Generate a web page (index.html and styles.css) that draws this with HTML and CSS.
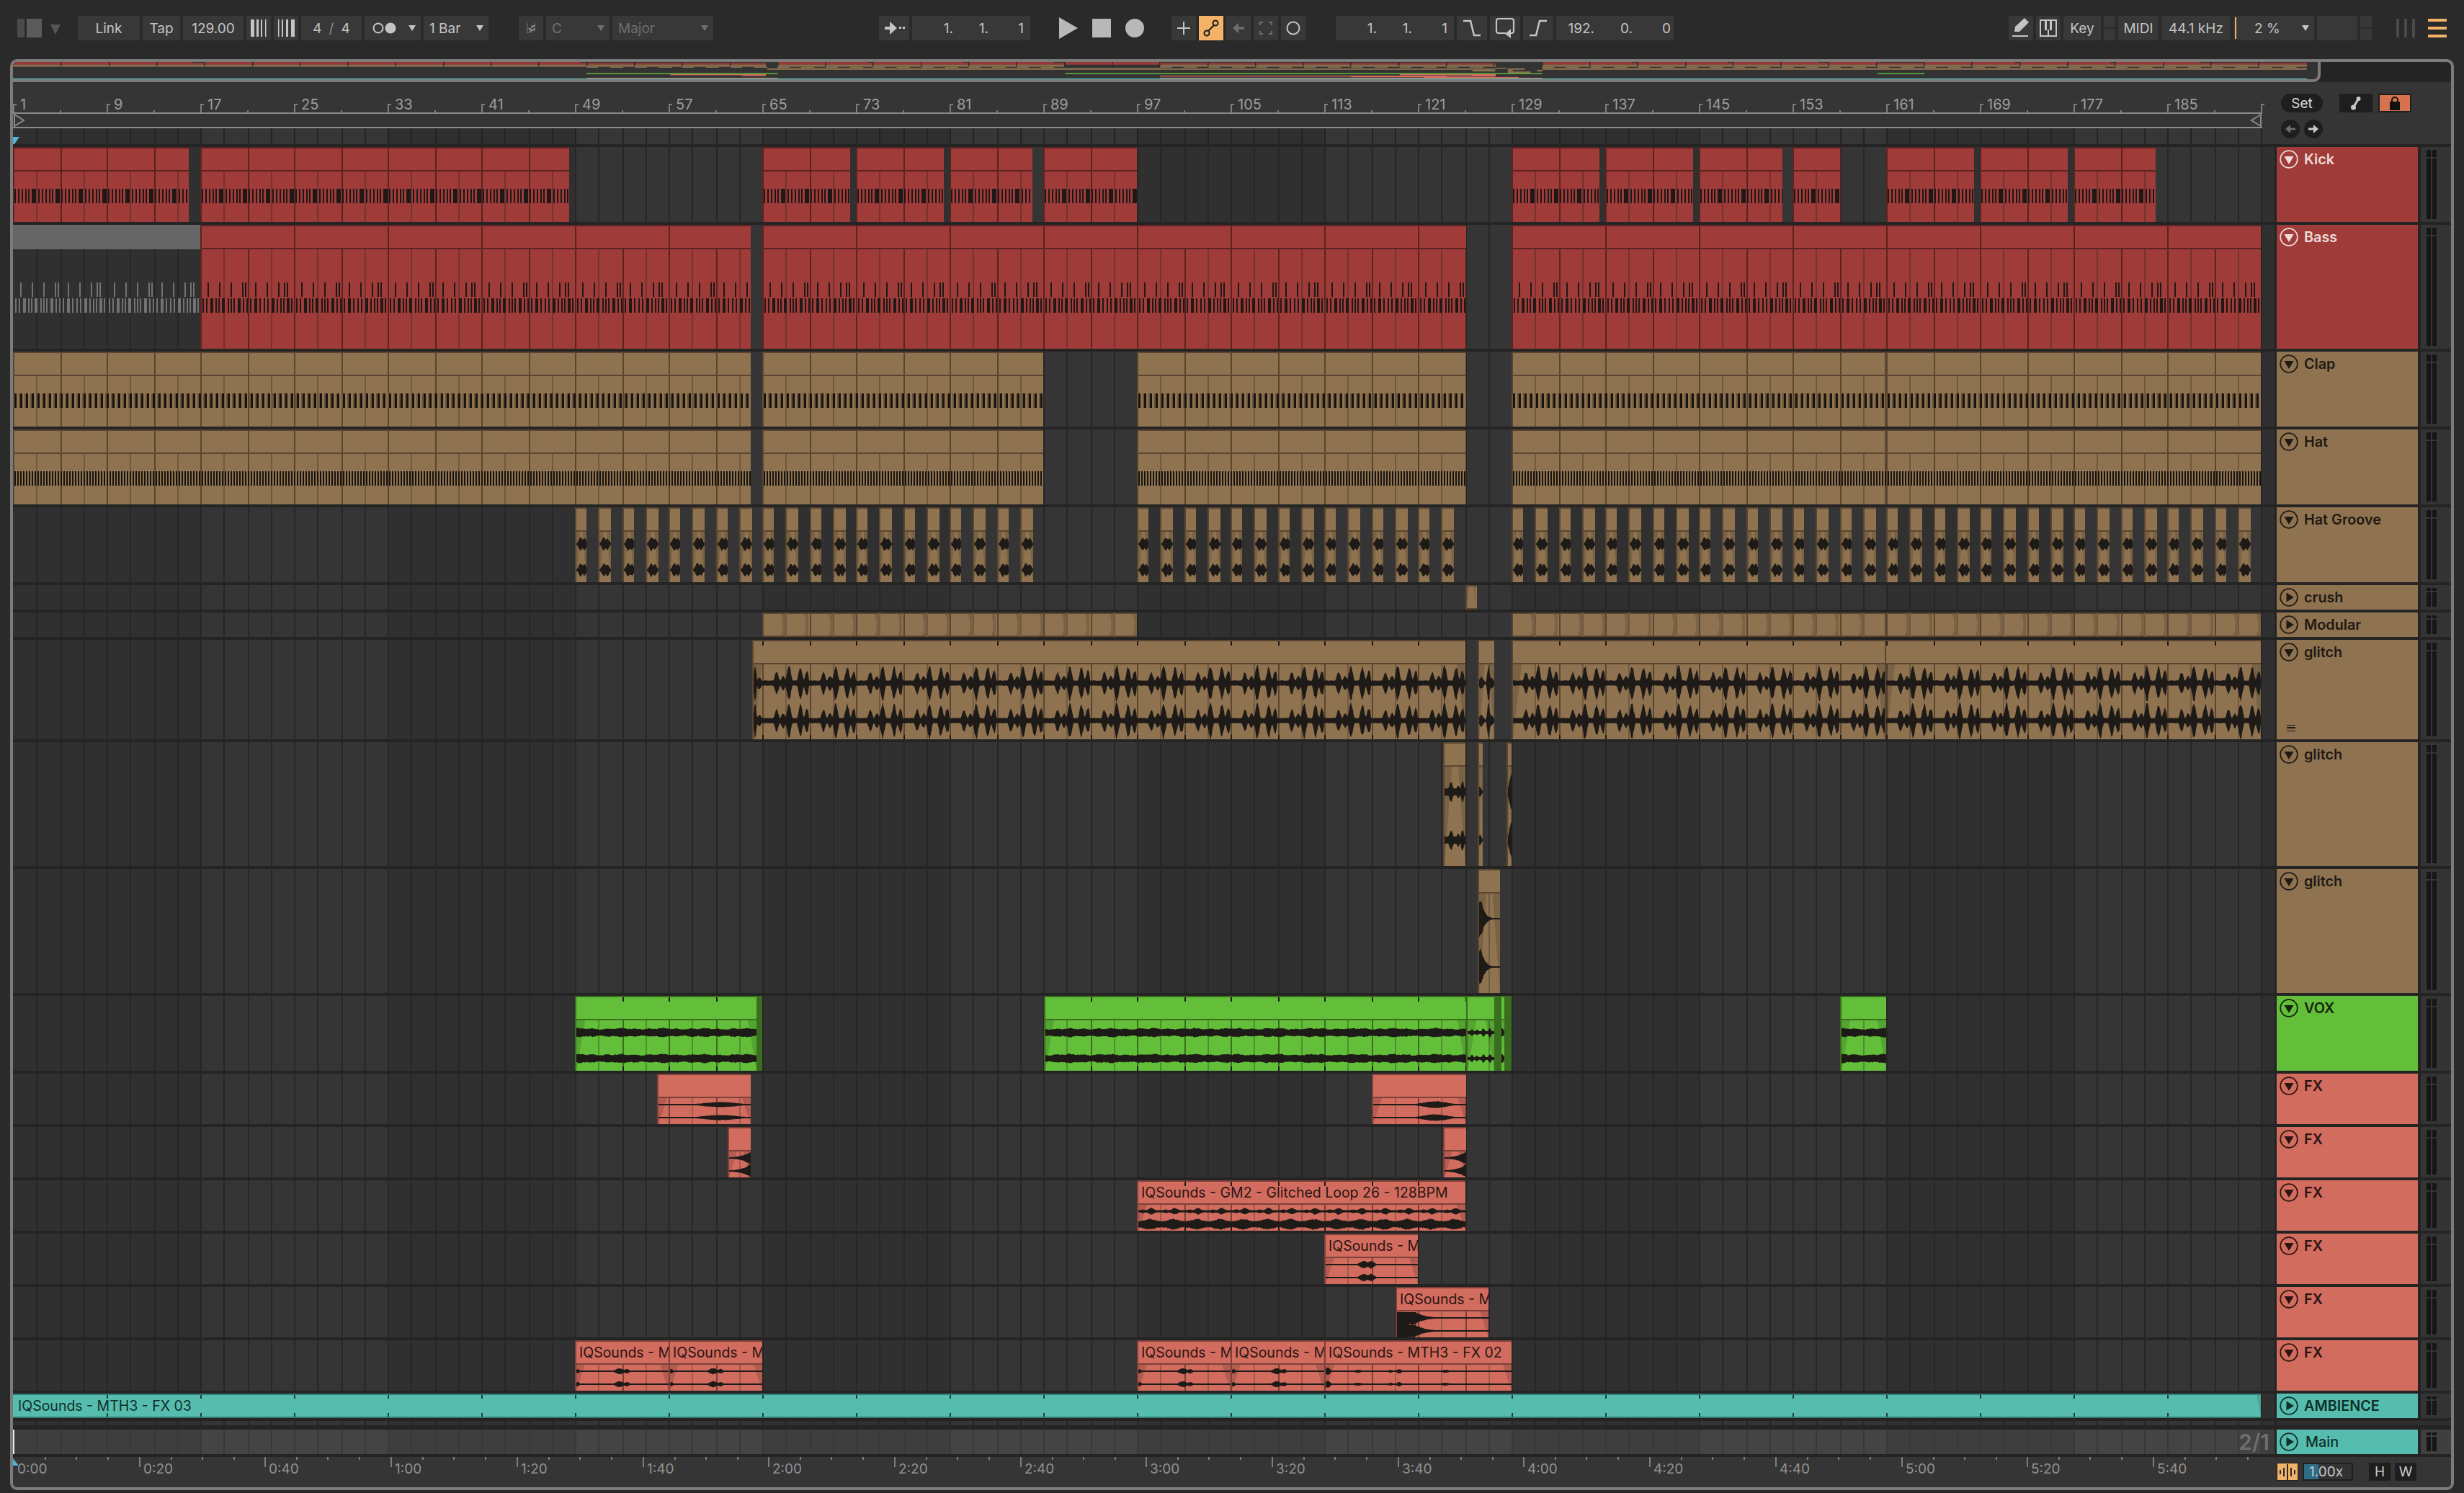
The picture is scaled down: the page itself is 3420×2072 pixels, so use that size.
FILE: index.html
```html
<!DOCTYPE html>
<html lang="en">
<head>
<meta charset="utf-8">
<title>Arrangement</title>
<link rel="stylesheet" href="styles.css">
</head>
<body>
<svg class="defs" width="0" height="0" aria-hidden="true">
  <symbol id="fold-open" viewBox="0 0 26 26"><circle cx="13" cy="13" r="11.8" fill="none" stroke="currentColor" stroke-width="1.8"/><path d="M6.5 9h13L13 20z" fill="currentColor"/></symbol>
  <symbol id="fold-closed" viewBox="0 0 26 26"><circle cx="13" cy="13" r="11.8" fill="none" stroke="currentColor" stroke-width="1.8"/><path d="M9.500 6.500v13L20 13z" fill="currentColor"/></symbol>
</svg>

<header class="toolbar">
  <div class="tb-group g-app">
    <svg class="ico" width="60" height="34" viewBox="0 0 60 34"><rect x="0" y="4" width="10" height="26" fill="#4b4b4b"/><rect x="13" y="4" width="21" height="26" fill="#5b5b5b"/><path d="M46 12h14l-7 14z" fill="#555"/></svg>
  </div>
  <div class="tb-group g-link">
    <div class="btn w-link">Link</div>
    <div class="btn w-tap">Tap</div>
    <div class="btn w-tempo">129.00</div>
    <div class="btn w-nudge"><svg width="26" height="26" viewBox="0 0 26 26"><g fill="#c4c4c4"><rect x="2" y="1" width="5" height="24"/><rect x="10" y="1" width="3" height="24"/><rect x="16" y="1" width="2" height="24"/><rect x="22" y="1" width="1.500" height="24"/></g></svg></div>
    <div class="btn w-nudge"><svg width="26" height="26" viewBox="0 0 26 26"><g fill="#c4c4c4"><rect x="2" y="1" width="1.500" height="24"/><rect x="7" y="1" width="2" height="24"/><rect x="13" y="1" width="3" height="24"/><rect x="20" y="1" width="5" height="24"/></g></svg></div>
    <div class="btn w-sig">4 <span class="slash">/</span> 4</div>
    <div class="btn w-metro"><svg width="34" height="18" viewBox="0 0 34 18"><circle cx="8" cy="9" r="6.500" fill="none" stroke="#c4c4c4" stroke-width="2"/><circle cx="25" cy="9" r="7.500" fill="#c4c4c4"/></svg><i class="caret"></i></div>
    <div class="btn w-bar">1 Bar<i class="caret"></i></div>
  </div>
  <div class="tb-group g-scale dim">
    <div class="btn w-acc"><span class="accid">♭♯</span></div>
    <div class="btn w-key">C<i class="caret"></i></div>
    <div class="btn w-mode">Major<i class="caret"></i></div>
  </div>
  <div class="tb-group g-arr">
    <div class="btn w-follow"><svg width="34" height="24" viewBox="0 0 34 24"><path d="M4 10h7V3l10 9-10 9v-7H4z" fill="#c4c4c4"/><rect x="24" y="10" width="3" height="3" fill="#c4c4c4"/><rect x="29" y="10" width="3" height="3" fill="#c4c4c4"/></svg></div>
    <div class="btn pos w-pos"><span>1.</span><span>1.</span><span>1</span></div>
  </div>
  <div class="tb-group g-transport">
    <svg width="26" height="30" viewBox="0 0 26 30"><path d="M0 0l26 15L0 30z" fill="#b8b8b8"/></svg>
    <svg width="26" height="26" viewBox="0 0 26 26"><rect width="26" height="26" fill="#b8b8b8"/></svg>
    <svg width="26" height="26" viewBox="0 0 26 26"><circle cx="13" cy="13" r="13" fill="#b8b8b8"/></svg>
  </div>
  <div class="tb-group g-auto">
    <div class="btn w-sq"><svg width="18" height="18" viewBox="0 0 18 18"><path d="M8 0h2v8h8v2h-8v8H8v-8H0V8h8z" fill="#c4c4c4"/></svg></div>
    <div class="btn w-sq on"><svg width="24" height="24" viewBox="0 0 24 24" fill="none" stroke="#1a1a1a" stroke-width="2"><circle cx="6" cy="19" r="3.500"/><circle cx="18" cy="5" r="3.500"/><path d="M8 16l8-8"/></svg></div>
    <div class="btn w-sq"><svg width="20" height="20" viewBox="0 0 22 22"><path d="M20 9h-9V3L2 11l9 8v-6h9z" fill="#6e6e6e"/></svg></div>
    <div class="btn w-sq"><svg width="18" height="18" viewBox="0 0 18 18" fill="none" stroke="#6e6e6e" stroke-width="2"><path d="M1 5V1h4M13 1h4v4M17 13v4h-4M5 17H1v-4"/></svg></div>
    <div class="btn w-sq"><svg width="20" height="20" viewBox="0 0 20 20"><circle cx="10" cy="10" r="8.500" fill="none" stroke="#c4c4c4" stroke-width="2"/></svg></div>
  </div>
  <div class="tb-group g-loop">
    <div class="btn pos w-lstart"><span>1.</span><span>1.</span><span>1</span></div>
    <div class="btn w-punch"><svg width="26" height="26" viewBox="0 0 26 26"><path d="M1 3h10l5 20h9" fill="none" stroke="#c4c4c4" stroke-width="2.500"/></svg></div>
    <div class="btn w-punch"><svg width="28" height="30" viewBox="0 0 28 30"><path d="M15 22H5a3 3 0 0 1-3-3V5a3 3 0 0 1 3-3h18a3 3 0 0 1 3 3v14a3 3 0 0 1-3 3h-1" fill="none" stroke="#c4c4c4" stroke-width="2.200"/><path d="M22 16l-8 7 8 6z" fill="#c4c4c4"/></svg></div>
    <div class="btn w-punch"><svg width="26" height="26" viewBox="0 0 26 26"><path d="M1 23h9L15 3h10" fill="none" stroke="#c4c4c4" stroke-width="2.500"/></svg></div>
    <div class="btn pos w-llen"><span>192.</span><span>0.</span><span>0</span></div>
  </div>
  <div class="tb-group g-status">
    <div class="btn w-pencil"><svg width="24" height="28" viewBox="0 0 24 28"><path d="M17 0l6 6-13 13H3l1-7z" fill="#c4c4c4"/><rect x="0" y="24" width="22" height="2" fill="#c4c4c4"/></svg></div>
    <div class="btn w-pencil"><svg width="24" height="24" viewBox="0 0 24 24"><rect x="1" y="1" width="22" height="22" fill="none" stroke="#c4c4c4" stroke-width="2"/><g fill="#c4c4c4"><rect x="7" y="1" width="3" height="14"/><rect x="14" y="1" width="3" height="14"/><rect x="11" y="14" width="2" height="9"/></g></svg></div>
    <div class="btn w-keybtn">Key</div>
    <div class="stack"><i></i><i></i></div>
    <div class="btn w-midi">MIDI</div>
    <div class="btn w-rate">44.1 kHz</div>
    <div class="btn w-cpu"><b class="cpu-line"></b><span class="cpu-val">2 %</span><i class="caret"></i></div>
    <div class="btn w-blank"></div>
    <div class="stack"><i></i><i></i></div>
  </div>
  <div class="tb-group g-menu">
    <div class="bars"><i></i><i></i><i></i></div>
    <div class="burger"><i></i><i></i><i></i></div>
  </div>
</header>

<main class="frame">
  <div class="overview-row">
    <div class="overview"><svg id="overview" width="3203" height="24"></svg></div>
    <div class="overview-rest"></div>
  </div>

  <div class="ruler-row">
    <div class="ruler-col">
      <div class="beat-ruler" id="beats"></div>
      <div class="locators">
        <svg class="loc-start" width="18" height="18" viewBox="0 0 18 18"><path d="M2 1l13 8L2 17z" fill="none" stroke="#8a8a8a" stroke-width="2"/></svg>
        <svg class="loc-end" width="18" height="18" viewBox="0 0 18 18"><path d="M16 1L3 9l13 8z" fill="none" stroke="#8a8a8a" stroke-width="2"/></svg>
      </div>
      <div class="scrub" data-palette="scrub"><svg class="marker" width="10" height="10" viewBox="0 0 10 10"><path d="M0 0h9L2 10H0z" fill="#4ab7d6"/></svg></div>
    </div>
    <div class="set-panel">
      <div class="set-line">
        <div class="set-pill">Set</div>
        <div class="set-sq"><svg width="16" height="20" viewBox="0 0 16 20"><path d="M11 5L5 15" stroke="#c8c8c8" stroke-width="3"/><circle cx="11.500" cy="4" r="3" fill="#c8c8c8"/><circle cx="4.500" cy="16" r="3.500" fill="#c8c8c8"/></svg></div>
        <div class="set-sq lock"><svg width="16" height="20" viewBox="0 0 16 20"><path d="M4 9V6a4 4 0 0 1 8 0v3" fill="none" stroke="#111" stroke-width="2"/><rect x="1" y="8" width="14" height="12" fill="#111"/></svg></div>
      </div>
      <div class="set-line">
        <div class="set-round"><svg width="16" height="16" viewBox="0 0 16 16"><path d="M15 6.500H8V2L1 8l7 6V9.500h7z" fill="#6e6e6e"/></svg></div>
        <div class="set-round gap-small"><svg width="16" height="16" viewBox="0 0 16 16"><path d="M1 6.500h7V2l7 6-7 6V9.500H1z" fill="#c8c8c8"/></svg></div>
      </div>
    </div>
  </div>

  <section class="tracks">
    <div class="track h104 red" data-track="kick"><div class="lane"></div><div class="tname"><svg class="fold"><use href="#fold-open"/></svg><span>Kick</span></div><div class="meter"><i></i><i></i></div></div>
    <div class="track h172 red" data-track="bass"><div class="lane"></div><div class="tname"><svg class="fold"><use href="#fold-open"/></svg><span>Bass</span></div><div class="meter"><i></i><i></i></div></div>
    <div class="track h104 tan" data-track="clap"><div class="lane"></div><div class="tname"><svg class="fold"><use href="#fold-open"/></svg><span>Clap</span></div><div class="meter"><i></i><i></i></div></div>
    <div class="track h104 tan" data-track="hat"><div class="lane"></div><div class="tname"><svg class="fold"><use href="#fold-open"/></svg><span>Hat</span></div><div class="meter"><i></i><i></i></div></div>
    <div class="track h104 tan" data-track="groove"><div class="lane"></div><div class="tname"><svg class="fold"><use href="#fold-open"/></svg><span>Hat Groove</span></div><div class="meter"><i></i><i></i></div></div>
    <div class="track h34 tan" data-track="crush"><div class="lane"></div><div class="tname"><svg class="fold"><use href="#fold-closed"/></svg><span>crush</span></div><div class="meter thin"><i></i><i></i></div></div>
    <div class="track h34 tan" data-track="modular"><div class="lane"></div><div class="tname"><svg class="fold"><use href="#fold-closed"/></svg><span>Modular</span></div><div class="meter thin"><i></i><i></i></div></div>
    <div class="track h138 tan" data-track="glitch1"><div class="lane"></div><div class="tname"><svg class="fold"><use href="#fold-open"/></svg><span>glitch</span><b class="handle"></b></div><div class="meter"><i></i><i></i></div></div>
    <div class="track h172 tan" data-track="glitch2"><div class="lane"></div><div class="tname"><svg class="fold"><use href="#fold-open"/></svg><span>glitch</span></div><div class="meter"><i></i><i></i></div></div>
    <div class="track h172 tan" data-track="glitch3"><div class="lane"></div><div class="tname"><svg class="fold"><use href="#fold-open"/></svg><span>glitch</span></div><div class="meter"><i></i><i></i></div></div>
    <div class="track h104 green" data-track="vox"><div class="lane"></div><div class="tname"><svg class="fold"><use href="#fold-open"/></svg><span>VOX</span></div><div class="meter"><i></i><i></i></div></div>
    <div class="track h70 salmon" data-track="fx1"><div class="lane"></div><div class="tname"><svg class="fold"><use href="#fold-open"/></svg><span>FX</span></div><div class="meter"><i></i><i></i></div></div>
    <div class="track h70 salmon" data-track="fx2"><div class="lane"></div><div class="tname"><svg class="fold"><use href="#fold-open"/></svg><span>FX</span></div><div class="meter"><i></i><i></i></div></div>
    <div class="track h70 salmon" data-track="fx3"><div class="lane"></div><div class="tname"><svg class="fold"><use href="#fold-open"/></svg><span>FX</span></div><div class="meter"><i></i><i></i></div></div>
    <div class="track h70 salmon" data-track="fx4"><div class="lane"></div><div class="tname"><svg class="fold"><use href="#fold-open"/></svg><span>FX</span></div><div class="meter"><i></i><i></i></div></div>
    <div class="track h70 salmon" data-track="fx5"><div class="lane"></div><div class="tname"><svg class="fold"><use href="#fold-open"/></svg><span>FX</span></div><div class="meter"><i></i><i></i></div></div>
    <div class="track h70 salmon" data-track="fx6"><div class="lane"></div><div class="tname"><svg class="fold"><use href="#fold-open"/></svg><span>FX</span></div><div class="meter"><i></i><i></i></div></div>
    <div class="track h34 teal" data-track="amb"><div class="lane"></div><div class="tname"><svg class="fold"><use href="#fold-closed"/></svg><span>AMBIENCE</span></div><div class="meter thin"><i></i><i></i></div></div>
  </section>

  <div class="track stub"><div class="lane" data-palette="track"></div><div class="stub-fill"></div></div>

  <div class="track h34 teal main-track">
    <div class="lane" data-palette="main"><b class="playhead"></b><span class="sig-note">2/1</span></div>
    <div class="tname"><svg class="fold"><use href="#fold-closed"/></svg><span class="main-name">Main</span></div>
    <div class="meter thin light"><i></i><i></i></div>
  </div>

  <div class="time-row">
    <div class="time-ruler" id="times"><svg class="marker-time" width="10" height="10" viewBox="0 0 10 10"><path d="M0 0l8 10H0z" fill="#4ab7d6"/></svg></div>
    <div class="time-tools">
      <div class="tool-wave"><svg width="24" height="22" viewBox="0 0 24 22"><g fill="#2a2a2a"><rect x="1" y="8" width="2" height="6"/><rect x="6" y="5" width="2" height="12"/><rect x="11" y="0" width="2" height="22"/><rect x="16" y="5" width="2" height="12"/><rect x="21" y="8" width="2" height="6"/></g></svg></div>
      <div class="tool-zoom"><b class="zoom-fill"></b><span>1.00x</span></div>
      <div class="tool-hw first">H</div>
      <div class="tool-hw">W</div>
    </div>
  </div>
</main>
<script src="app.js"></script>
</body>
</html>
```
FILE: styles.css
```css
* { box-sizing: border-box; }
html, body { margin: 0; padding: 0; }
body {
  width: 3420px;
  height: 2072px;
  overflow: hidden;
  background: #2a2a2a;
  font-family: Inter, "Noto Sans", "Liberation Sans", sans-serif;
  color: #c4c4c4;
}
.defs { position: absolute; }

/* toolbar */
.toolbar { display: flex; align-items: center; height: 82px; padding: 22px 0 26px 24px; }
.tb-group { display: flex; align-items: center; gap: 4px; height: 34px; }
.btn {
  display: flex; align-items: center; justify-content: center;
  height: 34px; background: #383838; font-size: 19px; white-space: nowrap;
}
.dim .btn { color: #6f6f6f; }
.g-link { margin-left: 24px; }
.g-scale { margin-left: 42px; }
.g-arr { margin-left: 230px; }
.g-transport { margin-left: 40px; gap: 20px; }
.g-auto { margin-left: 38px; }
.g-loop { margin-left: 42px; }
.g-status { margin-left: 465px; }
.g-menu { margin-left: 34px; gap: 18px; }
.w-link { width: 86px; } .w-tap { width: 52px; } .w-tempo { width: 84px; }
.w-nudge { width: 34px; } .w-sig { width: 84px; gap: 10px; } .slash { color: #8a8a8a; }
.w-metro { width: 78px; justify-content: flex-start; padding-left: 11px; position: relative; }
.w-bar { width: 90px; justify-content: flex-start; padding-left: 8px; position: relative; }
.w-acc { width: 34px; } .w-key { width: 88px; justify-content: flex-start; padding-left: 8px; position: relative; }
.w-mode { width: 140px; justify-content: flex-start; padding-left: 8px; position: relative; }
.accid { font-family: "DejaVu Sans", sans-serif; font-size: 19px; letter-spacing: -4px; color: #a0a0a0; margin-left: -4px; }
.caret { position: absolute; right: 7px; top: 13px; width: 0; height: 0; border: 5px solid transparent; border-top: 8px solid #c4c4c4; border-bottom: 0; }
.dim .caret { border-top-color: #6f6f6f; }
.w-follow { width: 42px; }
.pos { justify-content: flex-end; padding-right: 9px; }
.pos span { display: block; text-align: right; }
.w-pos { width: 164px; } .w-lstart { width: 164px; }
.w-pos span, .w-lstart span { width: 49px; }
.w-llen { width: 163px; padding-right: 4px; } .w-llen span { width: 54px; }
.w-sq { width: 34px; } .on { background: #f3b267; }
.w-punch { width: 42px; }
.w-pencil { width: 34px; } .w-keybtn { width: 52px; } .w-midi { width: 56px; } .w-rate { width: 96px; }
.w-cpu { width: 112px; justify-content: flex-start; position: relative; }
.cpu-line { width: 2px; height: 30px; background: #f3b267; margin-left: 2px; }
.cpu-val { margin-left: 25px; }
.w-blank { width: 56px; }
.stack { display: flex; flex-direction: column; gap: 2px; width: 16px; height: 34px; }
.stack i { display: block; flex: 1; background: #383838; }
.bars { display: flex; gap: 7px; height: 26px; }
.bars i { display: block; width: 4px; background: #4a4a4a; }
.burger { display: flex; flex-direction: column; justify-content: space-between; width: 26px; height: 26px; }
.burger i { display: block; height: 4px; background: #f3b267; }

/* frame */
.frame {
  display: flex; flex-direction: column;
  width: 3392px; height: 1986px; margin-left: 14px;
  border: 4px solid #7b7b7b; border-radius: 10px;
  background: #242424; overflow: hidden;
}
.overview-row { display: flex; height: 28px; flex: none; }
.overview { width: 3203px; height: 28px; background: #333; border-bottom: 4px solid #7b7b7b; border-right: 4px solid #7b7b7b; border-bottom-right-radius: 10px; overflow: hidden; flex: none; }
.overview svg { display: block; }
.overview-rest { flex: 1; height: 28px; background: #383838; border-bottom: 4px solid #2b2b2b; margin-left: -4px; position: relative; z-index: -1; }
.ruler-row { display: flex; height: 86px; flex: none; background: #353535; }
.ruler-col { width: 3122px; flex: none; display: flex; flex-direction: column; }
.beat-ruler { height: 42px; position: relative; flex: none; }
.bar-mark { position: absolute; top: 30px; height: 12px; width: 5px; border-left: 2px solid #7d7d7d; border-top: 2px solid #7d7d7d; }
.bar-num { position: absolute; top: 19px; font-size: 20px; line-height: 24px; color: #9d9d9d; white-space: nowrap; }
.bar-min { position: absolute; top: 39px; width: 2px; height: 3px; background: #7d7d7d; }
.locators { height: 22px; flex: none; border-top: 2px solid #8a8a8a; border-bottom: 2px solid #8a8a8a; display: flex; justify-content: space-between; background: #353535; align-items: center; }
.scrub { height: 22px; flex: none; position: relative; overflow: hidden; }
.marker { position: absolute; left: 0; bottom: 0; }
.set-panel { flex: 1; padding: 16px 0 0 26px; display: flex; flex-direction: column; gap: 10px; }
.set-line { display: flex; height: 26px; }
.set-pill { width: 58px; height: 26px; border-radius: 13px; background: #1e1e1e; font-size: 19px; color: #dcdcdc; display: flex; align-items: center; justify-content: center; }
.set-sq { width: 46px; height: 26px; background: #1e1e1e; display: flex; align-items: center; justify-content: center; margin-left: 8px; }
.set-sq:nth-child(2) { margin-left: 23px; }
.set-sq.lock { background: #d6724f; border: 2px solid #1e1e1e; }
.set-round { width: 26px; height: 26px; border-radius: 13px; background: #1e1e1e; display: flex; align-items: center; justify-content: center; }
.gap-small { margin-left: 6px; }

/* tracks */
.tracks { display: flex; flex-direction: column; gap: 4px; padding-top: 4px; flex: none; }
.track { display: grid; grid-template-columns: 3139px 199px 46px; flex: none; }
.h104 { height: 104px; } .h172 { height: 172px; } .h138 { height: 138px; } .h70 { height: 70px; } .h34 { height: 34px; }
.lane { position: relative; overflow: hidden; width: 3139px; height: 100%; }
.gridbg { position: absolute; left: 0; top: 0; display: block; }
.tname {
  position: relative; width: 196px; height: 100%; margin-left: 3px;
  display: flex; align-items: flex-start; gap: 8px; padding: 4px 0 0 4px;
  background: var(--c); color: var(--t);
  font-size: 19.8px; font-weight: 600; line-height: 26px; white-space: nowrap;
}
.fold { width: 26px; height: 26px; flex: none; }
.handle { position: absolute; left: 14px; bottom: 11px; width: 12px; height: 9px; border-top: 1.5px solid var(--t); border-bottom: 1.5px solid var(--t); }
.handle::after { content: ""; position: absolute; left: 0; right: 0; top: 2px; height: 1.5px; background: var(--t); }
.meter { margin-left: 4px; background: #343434; padding: 4px 0 4px 8px; display: flex; flex-direction: column; gap: 2px; height: 100%; }
.meter i { display: block; width: 14px; background: repeating-linear-gradient(to right, #161616 0 6px, transparent 6px 8px); }
.meter i:first-child { height: 10px; flex: none; }
.meter i:last-child { flex: 1; }
.meter.thin i:first-child { height: 4px; }
.meter.light { background: #3f3f3f; }

.red { --c: #9f3b38; --e: #5b2321; --m: #743230; --t: #eddcda; }
.tan { --c: #8f7350; --e: #5a4630; --m: #6f5940; --t: #1e1a14; }
.green { --c: #63bf3a; --e: #3a6e1f; --m: #4e9030; --t: #14250c; }
.salmon { --c: #d26c5f; --e: #7c4038; --m: #a05a50; --t: #2b1512; }
.teal { --c: #56bcae; --e: #2f7d74; --m: #3a8f85; --t: #0f2f2b; }

.clip { position: absolute; top: 0; bottom: 0; background: var(--c); overflow: hidden; }
.clip svg { position: absolute; left: 0; top: 0; display: block; }
.clip-title { position: absolute; left: 6px; top: 2px; height: 30px; line-height: 30px; font-size: 19.5px; color: #2a1512; white-space: nowrap; }
.teal .clip-title { color: #0f2f2b; left: 7px; }
.clip.stubclip { background: var(--e); }
.clip.gone { background: transparent; }

.stub { height: 6px; margin-top: 4px; grid-template-columns: 3139px 1fr; }
.stub-fill { background: #2e2e2e; margin-left: 3px; }
.main-track { margin-top: 6px; }
.main-name { font-weight: 500; margin-left: 2px; }
.playhead { position: absolute; left: 0; top: 0; bottom: 0; width: 2px; background: #e8e8e8; z-index: 2; }
.sig-note { position: absolute; right: 7px; top: 0; font-size: 30px; line-height: 34px; font-weight: 600; color: #6e6e6e; z-index: 2; }

.time-row { display: flex; flex: 1; margin-top: 4px; background: #353535; }
.time-ruler { width: 3142px; position: relative; flex: none; overflow: hidden; }
.marker-time { position: absolute; left: 0; top: 2px; }
.t-major { position: absolute; top: 0; width: 2px; height: 14px; background: #7d7d7d; }
.t-minor { position: absolute; top: 0; width: 2px; height: 4px; background: #7d7d7d; }
.t-label { position: absolute; top: 5px; font-size: 19px; line-height: 24px; color: #929292; white-space: nowrap; }
.time-tools { display: flex; align-items: flex-start; padding-top: 8px; }
.tool-wave { width: 30px; height: 25px; background: #f3b267; border: 1px solid #222; display: flex; align-items: center; justify-content: center; }
.tool-zoom { position: relative; width: 70px; height: 25px; margin-left: 6px; background: #333; border: 2px solid #1e1e1e; font-size: 19px; line-height: 21px; color: #c8c8c8; padding-left: 7px; }
.tool-zoom span { position: relative; }
.zoom-fill { position: absolute; left: 0; top: 0; bottom: 0; width: 20px; background: #2f6c88; }
.tool-hw { width: 30px; height: 25px; margin-left: 6px; background: #1e1e1e; display: flex; align-items: center; justify-content: center; font-size: 19px; color: #c8c8c8; }
.tool-hw.first { margin-left: 22px; }
```
FILE: app.js
```js
/* Arrangement data and drawing. All x values are page pixels of the 130px-per-8-bars timeline. */
var LEFT = 18;
var OFFS = [0, 32, 66, 98];
function gx(k) { return LEFT + 130 * Math.floor(k / 4) + OFFS[k % 4]; }
function g(x, c, s, a) { var d = (x - c) / s; return a * Math.exp(-d * d / 2); }

var seed = 7;
function rnd() { seed = (seed * 16807) % 2147483647; return seed / 2147483647; }

var LOOP_PEAKS = [[20, 15], [29, 10], [37, 24], [53, 22], [62, 17]];
function loopAmp(x) {
  var p = ((x - 1058) % 65 + 65) % 65, a = 3.5;
  for (var i = 0; i < LOOP_PEAKS.length; i++) a = Math.max(a, g(p, LOOP_PEAKS[i][0], 2.6, LOOP_PEAKS[i][1]));
  return a;
}
function peaks(base, list) {
  return function (x) {
    var a = base;
    for (var i = 0; i < list.length; i++) a = Math.max(a, g(x, list[i][0], list[i][1], list[i][2]));
    return a;
  };
}
function decay(start, amp, tau, base) {
  return function (x) { return Math.max(base, x < start ? amp : amp * Math.exp(-(x - start) / tau)); };
}
function rise(end, amp, tau, base) {
  return function (x) { return Math.max(base, amp * Math.exp(-(end - x) / tau)); };
}
function voxAmp(x) { return 5.2 + 0.5 * Math.sin(x / 9) + 0.5 * Math.sin(x / 3.1); }
function fx3Amp(x, ch) {
  var p = ((x - 1578) % 32.5 + 32.5) % 32.5;
  return ch === 0 ? 1.5 + g(p, 20, 3, 3) + g(p, 8, 2, 1) : 3.5 + g(p, 18, 6, 3) + Math.abs(Math.sin(x * 1.7));
}

var SHORT = "IQSounds - M";
var TRACKS = {
  kick: { titleStep: 2, midi: "kick", clips: [[18, 262], [278, 790], [1058, 1180], [1188, 1310], [1318, 1433], [1448, 1578], [2098, 2220], [2228, 2350], [2358, 2474], [2488, 2555], [2618, 2740], [2748, 2870], [2878, 2992]] },
  bass: { titleStep: 4, midi: "bass", clips: [[18, 278, { gone: true }], [278, 1042], [1058, 2035], [2098, 3138]] },
  clap: { titleStep: 2, midi: "clap", clips: [[18, 1042], [1058, 1448], [1578, 2035], [2098, 2616], [2616, 3138]] },
  hat: { titleStep: 2, midi: "hat", clips: [[18, 1042], [1058, 1448], [1578, 2035], [2098, 2616], [2616, 3138]] },
  groove: { clips: [] },
  crush: { plain: true, clips: [[2034, 2050]] },
  modular: { plain: true, cells: true, clips: [[1058, 1578], [2098, 2616], [2616, 3138]] },
  glitch1: { ticks: 2, centers: [60, 112], clips: [
    [1044, 2034, { amp: function (x) { return x < 1058 ? Math.max(g(x, 1048, 1.6, 24), g(x, 1054, 2.5, 8)) : loopAmp(x); } }],
    [2051, 2074, { amp: peaks(1, [[2056, 3, 8], [2066, 1.6, 25], [2070, 3, 7]]) }],
    [2098, 2616, { amp: loopAmp }], [2616, 3138, { amp: loopAmp }]] },
  glitch2: { centers: [69, 136], clips: [
    [2003, 2034, { amp: peaks(5, [[2014, 2.5, 14], [2024, 2, 9], [2030, 2, 15]]) }],
    [2051, 2058, { amp: peaks(1, [[2054, 2, 7]]) }],
    [2091, 2098, { amp: peaks(1, [[2098, 3, 24]]) }]] },
  glitch3: { centers: [69, 136], clips: [[2051, 2082, { amp: decay(2056, 24, 5, 1) }]] },
  vox: { ticks: 2, centers: [51, 87], clips: [
    [798, 1050, { amp: voxAmp }], [1050, 1058, { stub: true }],
    [1449, 2035, { amp: voxAmp }],
    [2035, 2074, { amp: peaks(2, [[2043, 2, 5], [2050, 2, 4], [2059, 2, 6], [2068, 2, 6]]) }],
    [2074, 2082, { stub: true }], [2082, 2088, { amp: peaks(2, [[2085, 2, 6]]) }], [2088, 2098, { stub: true }],
    [2554, 2618, { amp: voxAmp, noTicks: true }]] },
  fx1: { centers: [43, 61], clips: [[912, 1042, { amp: peaks(1, [[1000, 22, 3.5]]) }], [1904, 2035, { amp: peaks(1, [[1992, 16, 4.5]]) }]] },
  fx2: { centers: [43, 61], clips: [[1010, 1042, { amp: rise(1042, 9, 12, 1) }], [2003, 2035, { amp: rise(2035, 9, 12, 1) }]] },
  fx3: { ticks: 2, centers: [43, 61], clips: [[1578, 2034, { amp: fx3Amp, title: "IQSounds - GM2 - Glitched Loop 26 - 128BPM" }]] },
  fx4: { centers: [43, 61], clips: [[1838, 1968, { title: SHORT, amp: peaks(1, [[1893, 5, 5], [1903, 4, 5]]) }]] },
  fx5: { centers: [43, 61], clips: [[1937, 2066, { title: SHORT, amp: function (x) { return x < 1964 ? Math.max(1, 11 - (x - 1942) * 0.12) : Math.max(1, 8.5 * Math.exp(-(x - 1964) / 13)); } }]] },
  fx6: { centers: [43, 61], clips: [
    [798, 928, { title: SHORT, amp: peaks(1, [[802, 2, 3], [860, 5, 4], [870, 3, 3]]) }],
    [928, 1058, { title: SHORT, amp: peaks(1, [[932, 2, 3], [990, 5, 4], [1000, 3, 3]]) }],
    [1578, 1708, { title: SHORT, amp: peaks(1, [[1582, 2, 3], [1642, 5, 4], [1652, 3, 3]]) }],
    [1708, 1838, { title: SHORT, amp: peaks(1, [[1712, 2, 3], [1772, 5, 4], [1782, 3, 3]]) }],
    [1838, 2098, { title: "IQSounds - MTH3 - FX  02", amp: peaks(1, [[1843, 3, 5], [1885, 5, 2], [1930, 3, 2], [1942, 3, 3], [2006, 5, 2]]) }]] },
  amb: { banner: true, clips: [[18, 3138, { title: "IQSounds - MTH3 - FX 03" }]] }
};

/* ---- grid ---- */
var PAL = {
  track: ["#303030", "#353535", "#262626"],
  scrub: ["#2f2f2f", "#363636", "#232323"],
  main: ["#3e3e3e", "#444444", "#383838"]
};
function gridSvg(h, pal) {
  var c = PAL[pal], s = "", i;
  for (i = 0; i < 13; i++) s += '<rect x="' + (260 * i) + '" y="0" width="260" height="' + h + '" fill="' + c[i % 2] + '"/>';
  for (i = 1; i <= 96; i++) s += '<rect x="' + (gx(i) - LEFT) + '" y="0" width="2" height="' + h + '" fill="' + c[2] + '"/>';
  return '<svg class="gridbg" width="3139" height="' + h + '" shape-rendering="crispEdges">' + s + "</svg>";
}

/* ---- MIDI-like bars ---- */
function bars(a, b, y, h, col, list, period) {
  var s = "", x0 = a - ((a - LEFT) % period);
  for (var o = x0; o < b; o += period) {
    for (var i = 0; i < list.length; i++) {
      var x = o + list[i][0], w = list[i][1];
      if (x + w <= a || x >= b) continue;
      s += '<rect x="' + (Math.round(x) - a) + '" y="' + y + '" width="' + w + '" height="' + h + '" fill="' + (list[i][2] || col) + '"/>';
    }
  }
  return s;
}
var KICK = [[2, 2], [7, 2], [12, 2], [17, 2], [21, 2], [26, 6]];
var BASS_SPARSE = [[10, 2], [26, 2], [42, 2], [58, 2], [62, 2], [76, 2], [92, 2], [108, 2], [116, 2], [120, 2]];
var BASS_DENSE = [[3, 2], [8, 2], [14, 4], [21, 2], [25, 2], [30, 4], [38, 2], [42, 2], [46, 2], [52, 4], [59, 2], [64, 2], [69, 2], [75, 4], [82, 2], [88, 2], [93, 2], [99, 4], [106, 2], [111, 2], [115, 2], [120, 4], [126, 2]];
function midiSvg(kind, a, b, gone) {
  var dark = "#1e1816", i, list;
  if (kind === "kick") return bars(a, b, 58, 20, dark, KICK, 32.5);
  if (kind === "bass") {
    var c = gone ? "#727272" : dark;
    return bars(a, b, 80, 20, c, BASS_SPARSE, 130) + bars(a, b, 102, 20, c, BASS_DENSE, 130);
  }
  if (kind === "clap") {
    list = [];
    for (i = 0; i < 8; i++) { list.push([i * 8, 2, "#6b5439"]); list.push([i * 8 + 2, 3]); }
    return bars(a, b, 58, 20, "#17140f", list, 64);
  }
  list = [];
  for (i = 0; i < 16; i++) list.push([i * 4 + 2, 2]);
  return bars(a, b, 58, 20, "#17140f", list, 64);
}

/* ---- waveform ---- */
function wavePath(a, b, cy, amp, ch, top) {
  var up = "", dn = "", x;
  for (x = a; x <= b; x++) {
    var v = amp(x, ch);
    var j1 = 0.88 + rnd() * 0.24, j2 = 0.88 + rnd() * 0.24;
    var y1 = Math.max(top, cy - v * j1).toFixed(1), y2 = (cy + v * j2).toFixed(1);
    up += (x === a ? "M" : "L") + (x - a) + " " + y1;
    dn = "L" + (x - a) + " " + y2 + dn;
  }
  return '<path transform="translate(2 0)" d="' + up + dn + 'Z" fill="#1d1a17"/>';
}
function wedges(w, top, h, size) {
  return '<path d="M2 ' + top + "h" + size + "L2 " + h + 'Z" fill="#000" opacity=".14"/>' +
    '<path d="M' + w + " " + top + "h" + (-size) + "L" + w + " " + h + 'Z" fill="#000" opacity=".14"/>';
}

/* ---- one clip ---- */
function rect(x, y, w, h, f) { return '<rect x="' + x + '" y="' + y + '" width="' + w + '" height="' + h + '" style="fill:' + f + '"/>'; }

function clipHtml(def, c, h) {
  var a = c[0], b = c[1], o = c[2] || {}, w = b - a, s = "", shapes = "", k;
  var E = "var(--e)", M = "var(--m)";
  var place = "left:" + (a - LEFT) + "px;width:" + w + "px";
  if (o.stub) return '<div class="clip stubclip" style="' + place + '"></div>';
  if (o.gone) {
    s = '<rect x="0" y="0" width="' + w + '" height="34" fill="#666"/>' + midiSvg(def.midi, a, b, true);
    return '<div class="clip gone" style="' + place + '"><svg width="' + w + '" height="' + h + '" shape-rendering="crispEdges">' + s + "</svg></div>";
  }
  if (def.banner) {
    s += rect(0, 0, w, 2, E) + rect(0, h - 2, w, 2, E);
    for (k = 1; k < 24; k++) s += rect(130 * k, 2, 2, 5, "#173f3a") + rect(130 * k, h - 7, 2, 5, "#173f3a");
    shapes += '<path d="M' + w + " 2h-6l6 " + (h - 4) + 'z" fill="#000" opacity=".12"/>';
  } else if (def.plain) {
    s += rect(0, 0, w, 2, E) + rect(0, 0, 2, h, E) + rect(0, h - 2, w, 2, E);
    if (def.cells) {
      for (k = 0; k <= 96; k++) {
        var lx = gx(k);
        if (lx > a && lx < b) s += rect(lx - a, 0, 2, h, k % 2 ? M : E);
        if (lx >= a && lx + 32 <= b) shapes += '<path d="M' + (lx - a + 26) + ' 2q5 15 0 ' + (h - 4) + 'h6V2z" fill="#000" opacity=".14"/>';
      }
    } else {
      shapes += '<path d="M2 ' + (h - 2) + 'L5 2H2zM14 ' + (h - 2) + 'L11 2H14z" fill="#000" opacity=".14"/>';
    }
  } else {
    s += rect(0, 0, w, 2, E) + rect(0, 0, 2, h, E) + rect(0, 32, w, 2, E);
    for (k = 1; k <= 96; k++) {
      var gl = gx(k);
      if (gl <= a || gl >= b) continue;
      s += rect(gl - a, 34, 2, h - 34, k % 2 ? M : E);
      if (def.titleStep && k % def.titleStep === 0) s += rect(gl - a, 2, 2, 30, E);
      if (def.ticks && !o.noTicks && k % def.ticks === 0) s += rect(gl - a, 2, 2, 6, "#1d1a17") + rect(gl - a, h - 6, 2, 6, "#1d1a17");
    }
    if (def.midi) s += midiSvg(def.midi, a, b, false);
    if (def.centers && o.amp) {
      shapes += wedges(w, 34, h, Math.min(12, w / 3));
      for (k = 0; k < def.centers.length; k++) shapes += wavePath(a + 2, b, def.centers[k], o.amp, k, 35);
    }
  }
  var titleEl = o.title ? '<div class="clip-title">' + o.title + "</div>" : "";
  return '<div class="clip" style="' + place + '"><svg width="' + w + '" height="' + h + '"><g shape-rendering="crispEdges">' + s + "</g>" + shapes + "</svg>" + titleEl + "</div>";
}

function grooveClips(h) {
  var def = { centers: [51, 87] }, ranges = [[798, 1433], [1578, 2020], [2098, 3122]], html = "", list = [];
  for (var k = 0; k < 96; k++) {
    var x = gx(k);
    for (var r = 0; r < ranges.length; r++) {
      if (x >= ranges[r][0] && x < ranges[r][1]) {
        var c = [x, x + (k % 2 ? 18 : 16), { amp: peaks(1, [[x + 8, 2.6, 9], [x + 13, 2.5, 8]]) }];
        html += clipHtml(def, c, h);
        list.push([c[0], c[1]]);
      }
    }
  }
  return { html: html, list: list };
}

/* ---- build ---- */
var over = [];
var rows = document.querySelectorAll(".track[data-track]");
for (var r = 0; r < rows.length; r++) {
  var row = rows[r], lane = row.querySelector(".lane"), def = TRACKS[row.dataset.track], h = row.offsetHeight, html = gridSvg(h, "track");
  var tone = getComputedStyle(row).getPropertyValue("--c");
  var list = def.clips.map(function (c) { return [c[0], c[1]]; });
  if (row.dataset.track === "groove") { var gc = grooveClips(h); html += gc.html; list = gc.list; }
  else def.clips.forEach(function (c) { html += clipHtml(def, c, h); });
  lane.innerHTML = html;
  over.push({ y: row.getBoundingClientRect().top, h: h, tone: tone, list: list });
}
document.querySelectorAll("[data-palette]").forEach(function (el) {
  var keep = el.innerHTML;
  el.innerHTML = gridSvg(el.offsetHeight, el.dataset.palette) + keep;
});

/* bar ruler */
var beats = document.getElementById("beats"), bh = "";
for (var i = 0; i < 24; i++) {
  var bx = 130 * i;
  bh += '<i class="bar-mark" style="left:' + bx + 'px"></i><span class="bar-num" style="left:' + (bx + 10) + 'px">' + (1 + 8 * i) + "</span>";
  bh += '<i class="bar-min" style="left:' + (bx + 65) + 'px"></i>';
}
bh += '<i class="bar-mark" style="left:3120px"></i>';
beats.innerHTML = bh;

/* time ruler */
var times = document.getElementById("times"), th = times.innerHTML;
for (var t = 0; t < 18; t++) {
  var tx0 = Math.round(174.7 * t), mm = Math.floor(t / 3), ss = (t % 3) * 20;
  if (t > 0) th += '<i class="t-major" style="left:' + tx0 + 'px"></i>';
  th += '<span class="t-label" style="left:' + (tx0 + 6) + 'px">' + mm + ":" + (ss ? ss : "00") + "</span>";
  for (var n = 1; n < 4; n++) th += '<i class="t-minor" style="left:' + Math.round(tx0 + 43.7 * n) + 'px"></i>';
}
times.innerHTML = th;

/* overview */
var ov = "", Y0 = over[0].y, SX = 1.0205, SY = 0.0132;
over.forEach(function (t) {
  var oy = (t.y - Y0) * SY, oh = Math.max(1.4, t.h * SY);
  t.list.forEach(function (c) {
    ov += '<rect x="' + ((c[0] - LEFT) * SX).toFixed(1) + '" y="' + oy.toFixed(1) + '" width="' + ((c[1] - c[0]) * SX).toFixed(1) + '" height="' + oh.toFixed(1) + '" fill="' + t.tone.trim() + '"/>';
  });
});
for (var q = 1; q < 48; q++) ov += '<rect x="' + (66.3 * q).toFixed(0) + '" y="0" width="1.5" height="6" fill="#2a2a2a"/>';
document.getElementById("overview").innerHTML = ov;
```
